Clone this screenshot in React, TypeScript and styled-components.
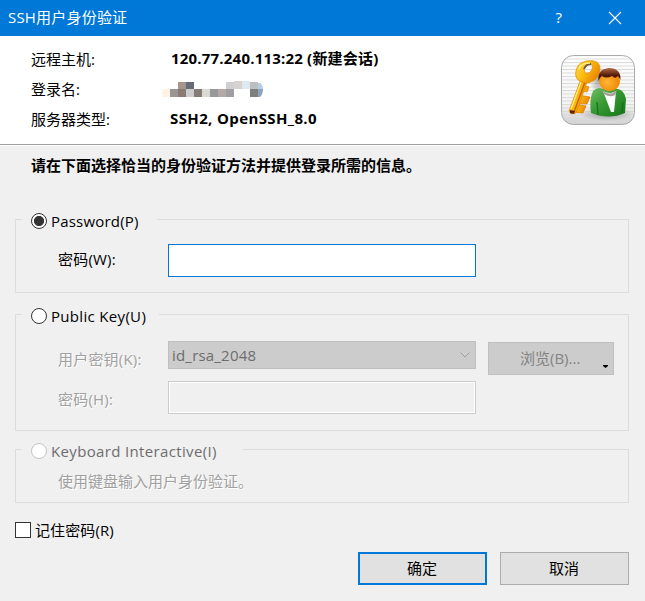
import React from "react";
import styled, { createGlobalStyle } from "styled-components";

const GlobalStyle = createGlobalStyle`
  *, *::before, *::after { box-sizing: border-box; }
  body {
    margin: 0;
    background: #f0f0f0;
    color: #000;
    font: 15px/20px "Open Sans", "Noto Sans CJK SC", sans-serif;
  }
`;

const Dialog = styled.main`
  display: flex;
  flex-direction: column;
  width: 645px;
  height: 601px;
  overflow: hidden;
  white-space: nowrap;
  background: #f0f0f0;
`;

const TitleBar = styled.header`
  display: flex;
  align-items: center;
  height: 36px;
  padding: 0 23px 0 8px;
  color: #fff;
  background: #0078d7;
`;

const Title = styled.h1`
  flex: 1;
  margin: -2px 0 0;
  font-size: 15px;
  font-weight: 400;
  letter-spacing: 0.2px;
`;

const TitleButton = styled.button`
  display: grid;
  place-items: center;
  height: 36px;
  padding: 0 0 2px;
  border: 0;
  color: inherit;
  background: none;
  font: inherit;
  & + & { margin-left: 46px; padding: 0; }
`;

const HostPanel = styled.section`
  display: flex;
  justify-content: space-between;
  height: 110px;
  padding: 13px 10px 0 31px;
  background: #fff;
  border-bottom: 1px solid #fff;
  box-shadow: inset 0 -1px #a0a0a0;
`;

const HostGrid = styled.dl`
  display: grid;
  grid-template-columns: 139px auto;
  grid-auto-rows: 30px;
  margin: 0;
`;

const HostLabel = styled.dt`
  margin: 0;
`;

const HostValue = styled.dd<{ $spacing?: number; $indent?: number }>`
  margin: -1px 0 0;
  padding-left: ${(p) => p.$indent ?? 0}px;
  font-weight: 700;
  letter-spacing: ${(p) => p.$spacing ?? 0}px;
`;

const Mosaic = styled.svg`
  display: block;
  margin: 3px 0 0 -8px;
`;

const HostIcon = styled.svg`
  display: block;
  margin-top: 6px;
`;

const Body = styled.div`
  padding: 9px 16px 0 15px;
`;

const Prompt = styled.p`
  margin: 0 0 44px 16px;
  font-weight: 700;
  letter-spacing: 0;
`;

const Group = styled.section<{ $height: number; $gap?: number }>`
  height: ${(p) => p.$height}px;
  margin-bottom: ${(p) => p.$gap ?? 0}px;
  border: 1px solid #dcdcdc;
`;

const Legend = styled.label<{ $width: number; $disabled?: boolean; $spacing?: number }>`
  display: flex;
  align-items: center;
  gap: 4px;
  width: ${(p) => p.$width}px;
  height: 20px;
  margin: -9px 0 0 6px;
  padding-left: 9px;
  color: ${(p) => (p.$disabled ? "#6d6d6d" : "#000")};
  background: #f0f0f0;
  letter-spacing: ${(p) => p.$spacing ?? 0}px;
`;

const Radio = styled.span<{ $checked?: boolean; $disabled?: boolean }>`
  flex: none;
  width: 16px;
  height: 16px;
  border: 1px solid ${(p) => (p.$disabled ? "#c4c4c4" : "#333")};
  border-radius: 50%;
  background: ${(p) => (p.$checked ? "radial-gradient(circle, #333 4.7px, #fff 5.4px)" : "#fff")};
`;

const FieldRow = styled.div<{ $top: number }>`
  display: grid;
  grid-template-columns: 110px 308px 126px;
  column-gap: 0;
  align-items: start;
  margin: ${(p) => p.$top}px 0 0 42px;
`;

const FieldLabel = styled.label<{ $disabled?: boolean; $top?: number }>`
  padding-top: ${(p) => p.$top ?? 5}px;
  color: ${(p) => (p.$disabled ? "#a0a0a0" : "#000")};
  text-shadow: ${(p) => (p.$disabled ? "1px 1px #fff" : "none")};
  letter-spacing: 0.2px;
`;

const Input = styled.input`
  width: 308px;
  height: 33px;
  padding: 0 4px;
  border: 1px solid #0078d7;
  border-radius: 0;
  outline: 0;
  background: #fff;
  font: inherit;
  &:disabled {
    border-color: #ccc;
    background: #f0f0f0;
    box-shadow: inset 0 0 0 1px #fff;
  }
`;

const Combo = styled.div`
  display: flex;
  align-items: center;
  justify-content: space-between;
  height: 28px;
  padding: 0 5px 0 3px;
  border: 1px solid #bfbfbf;
  color: #6d6d6d;
  background: #ccc;
  letter-spacing: 0.2px;
`;

const BrowseButton = styled.button`
  display: flex;
  align-items: center;
  height: 33px;
  width: 126px;
  margin: 1px 0 0 12px;
  padding: 0 5px 1px 31px;
  border: 1px solid #bfbfbf;
  color: #838383;
  background: #ccc;
  font: inherit;
  svg { margin: 16px 0 0 auto; }
`;

const Note = styled.p`
  margin: 10px 0 0 42px;
  color: #a0a0a0;
  text-shadow: 1px 1px #fff;
`;

const Remember = styled.label`
  display: flex;
  align-items: center;
  gap: 4px;
  height: 20px;
  letter-spacing: 0.1px;
`;

const CheckBox = styled.span`
  width: 16px;
  height: 16px;
  border: 1px solid #333;
  background: #fff;
`;

const Actions = styled.footer`
  display: flex;
  justify-content: flex-end;
  gap: 13px;
  margin-top: 12px;
`;

const ActionButton = styled.button<{ $primary?: boolean }>`
  width: 129px;
  height: 33px;
  padding: 0 1px 2px 0;
  border: ${(p) => (p.$primary ? "2px solid #0078d7" : "1px solid #adadad")};
  color: #000;
  background: #e1e1e1;
  font: inherit;
`;

const MOSAIC_CELLS: [number, number, number, number, string][] = [
  [16, 1, 8, 7, "#a4968d"], [24, 1, 8, 7, "#666b78"],
  [64, 1, 8, 7, "#cfcfd2"], [72, 0, 8, 8, "#d5d2d0"], [80, 0, 8, 8, "#dfe7f1"],
  [88, 1, 8, 7, "#bdbebd"], [96, 2, 8, 6, "#b5cde3"],
  [0, 8, 8, 8, "#fff3e5"], [8, 8, 8, 8, "#9a9694"], [16, 8, 8, 8, "#8b7b74"],
  [24, 8, 8, 8, "#cdcdcf"], [32, 8, 8, 8, "#857d75"], [40, 8, 8, 8, "#dbdad2"],
  [48, 8, 8, 8, "#979899"], [56, 8, 8, 8, "#b3aaa4"], [64, 8, 8, 8, "#a09ea2"],
  [88, 8, 8, 8, "#7d807f"], [96, 8, 8, 8, "#8fa3bd"],
];

const MaskedName = () => (
  <Mosaic width="102" height="16" viewBox="0 0 102 16" shapeRendering="crispEdges">
    <clipPath id="round">
      <path d="M0 0H91Q101 1 101 8Q101 13 98 16H0Z" />
    </clipPath>
    <g clipPath="url(#round)">
      {MOSAIC_CELLS.map(([x, y, w, h, fill]) => (
        <rect key={`${x}-${y}`} x={x} y={y} width={w} height={h} fill={fill} />
      ))}
    </g>
  </Mosaic>
);

const UserKeyIcon = () => (
  <HostIcon width="74" height="70" viewBox="0 0 74 70">
    <defs>
      <linearGradient id="tile" x1="0" y1="0" x2="0" y2="1">
        <stop offset="0" stopColor="#fff" />
        <stop offset=".7" stopColor="#f4f4f4" />
        <stop offset="1" stopColor="#cfcfcf" />
      </linearGradient>
      <pattern id="lines" width="4" height="3.5" patternUnits="userSpaceOnUse">
        <rect width="4" height="1" fill="#d9d9d9" />
      </pattern>
      <linearGradient id="gold" x1="0" y1="0" x2="1" y2=".6">
        <stop offset="0" stopColor="#ffe34a" />
        <stop offset=".5" stopColor="#fdbb12" />
        <stop offset="1" stopColor="#e88400" />
      </linearGradient>
      <radialGradient id="face" cx=".4" cy=".55" r=".6">
        <stop offset="0" stopColor="#ffb637" />
        <stop offset="1" stopColor="#ee8500" />
      </radialGradient>
      <linearGradient id="jacket" x1="0" y1="0" x2="1" y2="1">
        <stop offset="0" stopColor="#73bd65" />
        <stop offset=".45" stopColor="#369a34" />
        <stop offset="1" stopColor="#157419" />
      </linearGradient>
      <linearGradient id="hair" x1="0" y1="0" x2="0" y2="1">
        <stop offset="0" stopColor="#b56a45" />
        <stop offset=".6" stopColor="#4d1608" />
      </linearGradient>
      <radialGradient id="shade">
        <stop offset="0" stopColor="#777" stopOpacity=".65" />
        <stop offset="1" stopColor="#777" stopOpacity="0" />
      </radialGradient>
    </defs>
    <rect x=".5" y=".5" width="73" height="69" rx="12" fill="url(#tile)" />
    <rect x="1" y="1" width="72" height="68" rx="12" fill="url(#lines)" />
    <rect x=".5" y=".5" width="73" height="69" rx="12" fill="none" stroke="#aaa" />
    <ellipse cx="46" cy="59" rx="27" ry="7" fill="url(#shade)" />
    <ellipse cx="38" cy="25" rx="9" ry="15" fill="url(#shade)" />
    <path d="M18 29l10 3-2 5-9-2zM17 40l12 2-3 7-12-1zM14 49l11 2-3 7-11-1z" fill="url(#gold)" stroke="#dc7900" strokeWidth=".7" />
    <path d="M20 24L8 56l2 3 5-1 11-31z" fill="url(#gold)" stroke="#e58a00" strokeWidth=".8" />
    <path d="M24 27L13 57" stroke="#c96100" strokeWidth="1.3" />
    <path d="M20 27L10 54" stroke="#fff083" strokeWidth="1.2" />
    <path d="M9 55l5 1-1 3-4-1z" fill="#5d2205" />
    <path fillRule="evenodd" d="M16 13C18 7 26 5 33 6C40 8 40 14 37 21C34 27 25 30 19 26C14 24 14 18 16 13ZM24 12C22 16 24 19 27 18C31 17 33 11 30 9C27 8 25 9 24 12Z" fill="url(#gold)" stroke="#e58d00" strokeWidth=".8" />
    <path d="M23 14Q25 9 30 9" fill="none" stroke="#6b5a42" strokeWidth="1.8" />
    <path d="M18 14Q20 8 29 8" fill="none" stroke="#fff08a" strokeWidth="1.5" />
    <path d="M32 36Q37 31 42 34L57 34Q63 35 65 44L64 58Q48 65 30 58Q28 45 32 36Z" fill="url(#jacket)" />
    <path d="M42 36Q49 40 55 36L53 57L50 57Z" fill="#fff" />
    <path d="M41 35Q49 42 56 35L54 40Q49 43 43 39Z" fill="#aaa09a" />
    <path d="M36 47L37 60M62 47L61 58" fill="none" stroke="#10731a" strokeWidth="1.2" />
    <ellipse cx="48.5" cy="26.3" rx="10.5" ry="10" fill="url(#face)" />
    <path d="M37.5 26Q36 14 48 13Q60 13 59.5 25L57 21L54 23L51 21Q45 24 41 21Q39 22 37.5 26Z" fill="url(#hair)" />
  </HostIcon>
);

export default function App() {
  return (
    <>
      <GlobalStyle />
      <Dialog>
        <TitleBar>
          <Title>SSH用户身份验证</Title>
          <TitleButton>?</TitleButton>
          <TitleButton aria-label="关闭">
            <svg width="14" height="14" viewBox="0 0 14 14">
              <path d="M1 1L13 13M13 1L1 13" stroke="#fff" strokeWidth="1.1" />
            </svg>
          </TitleButton>
        </TitleBar>

        <HostPanel>
          <HostGrid>
            <HostLabel>远程主机:</HostLabel>
            <HostValue $indent={1} $spacing={0.2}>120.77.240.113:22 (新建会话)</HostValue>
            <HostLabel>登录名:</HostLabel>
            <HostValue><MaskedName /></HostValue>
            <HostLabel>服务器类型:</HostLabel>
            <HostValue $spacing={0.38}>SSH2, OpenSSH_8.0</HostValue>
          </HostGrid>
          <UserKeyIcon />
        </HostPanel>

        <Body>
          <Prompt>请在下面选择恰当的身份验证方法并提供登录所需的信息。</Prompt>

          <Group $height={74} $gap={21}>
            <Legend $width={135} $spacing={0.2}><Radio $checked />Password(P)</Legend>
            <FieldRow $top={13}>
              <FieldLabel>密码(W):</FieldLabel>
              <Input type="password" />
            </FieldRow>
          </Group>

          <Group $height={117} $gap={18}>
            <Legend $width={137} $spacing={0.32}><Radio />Public Key(U)</Legend>
            <FieldRow $top={15}>
              <FieldLabel $disabled $top={8}>用户密钥(K):</FieldLabel>
              <Combo>
                id_rsa_2048
                <svg width="10" height="6" viewBox="0 0 10 6">
                  <path d="M.5.5L5 5L9.5.5" fill="none" stroke="#a0a0a0" />
                </svg>
              </Combo>
              <BrowseButton>
                浏览(B)...
                <svg width="5" height="3" viewBox="0 0 5 3"><path d="M0 0H5V1L2.5 3L0 1Z" /></svg>
              </BrowseButton>
            </FieldRow>
            <FieldRow $top={6}>
              <FieldLabel $disabled $top={8}>密码(H):</FieldLabel>
              <Input type="password" disabled />
            </FieldRow>
          </Group>

          <Group $height={54} $gap={17}>
            <Legend $width={221} $disabled $spacing={0.35}><Radio $disabled />Keyboard Interactive(I)</Legend>
            <Note>使用键盘输入用户身份验证。</Note>
          </Group>

          <Remember><CheckBox />记住密码(R)</Remember>
          <Actions>
            <ActionButton $primary>确定</ActionButton>
            <ActionButton>取消</ActionButton>
          </Actions>
        </Body>
      </Dialog>
    </>
  );
}
